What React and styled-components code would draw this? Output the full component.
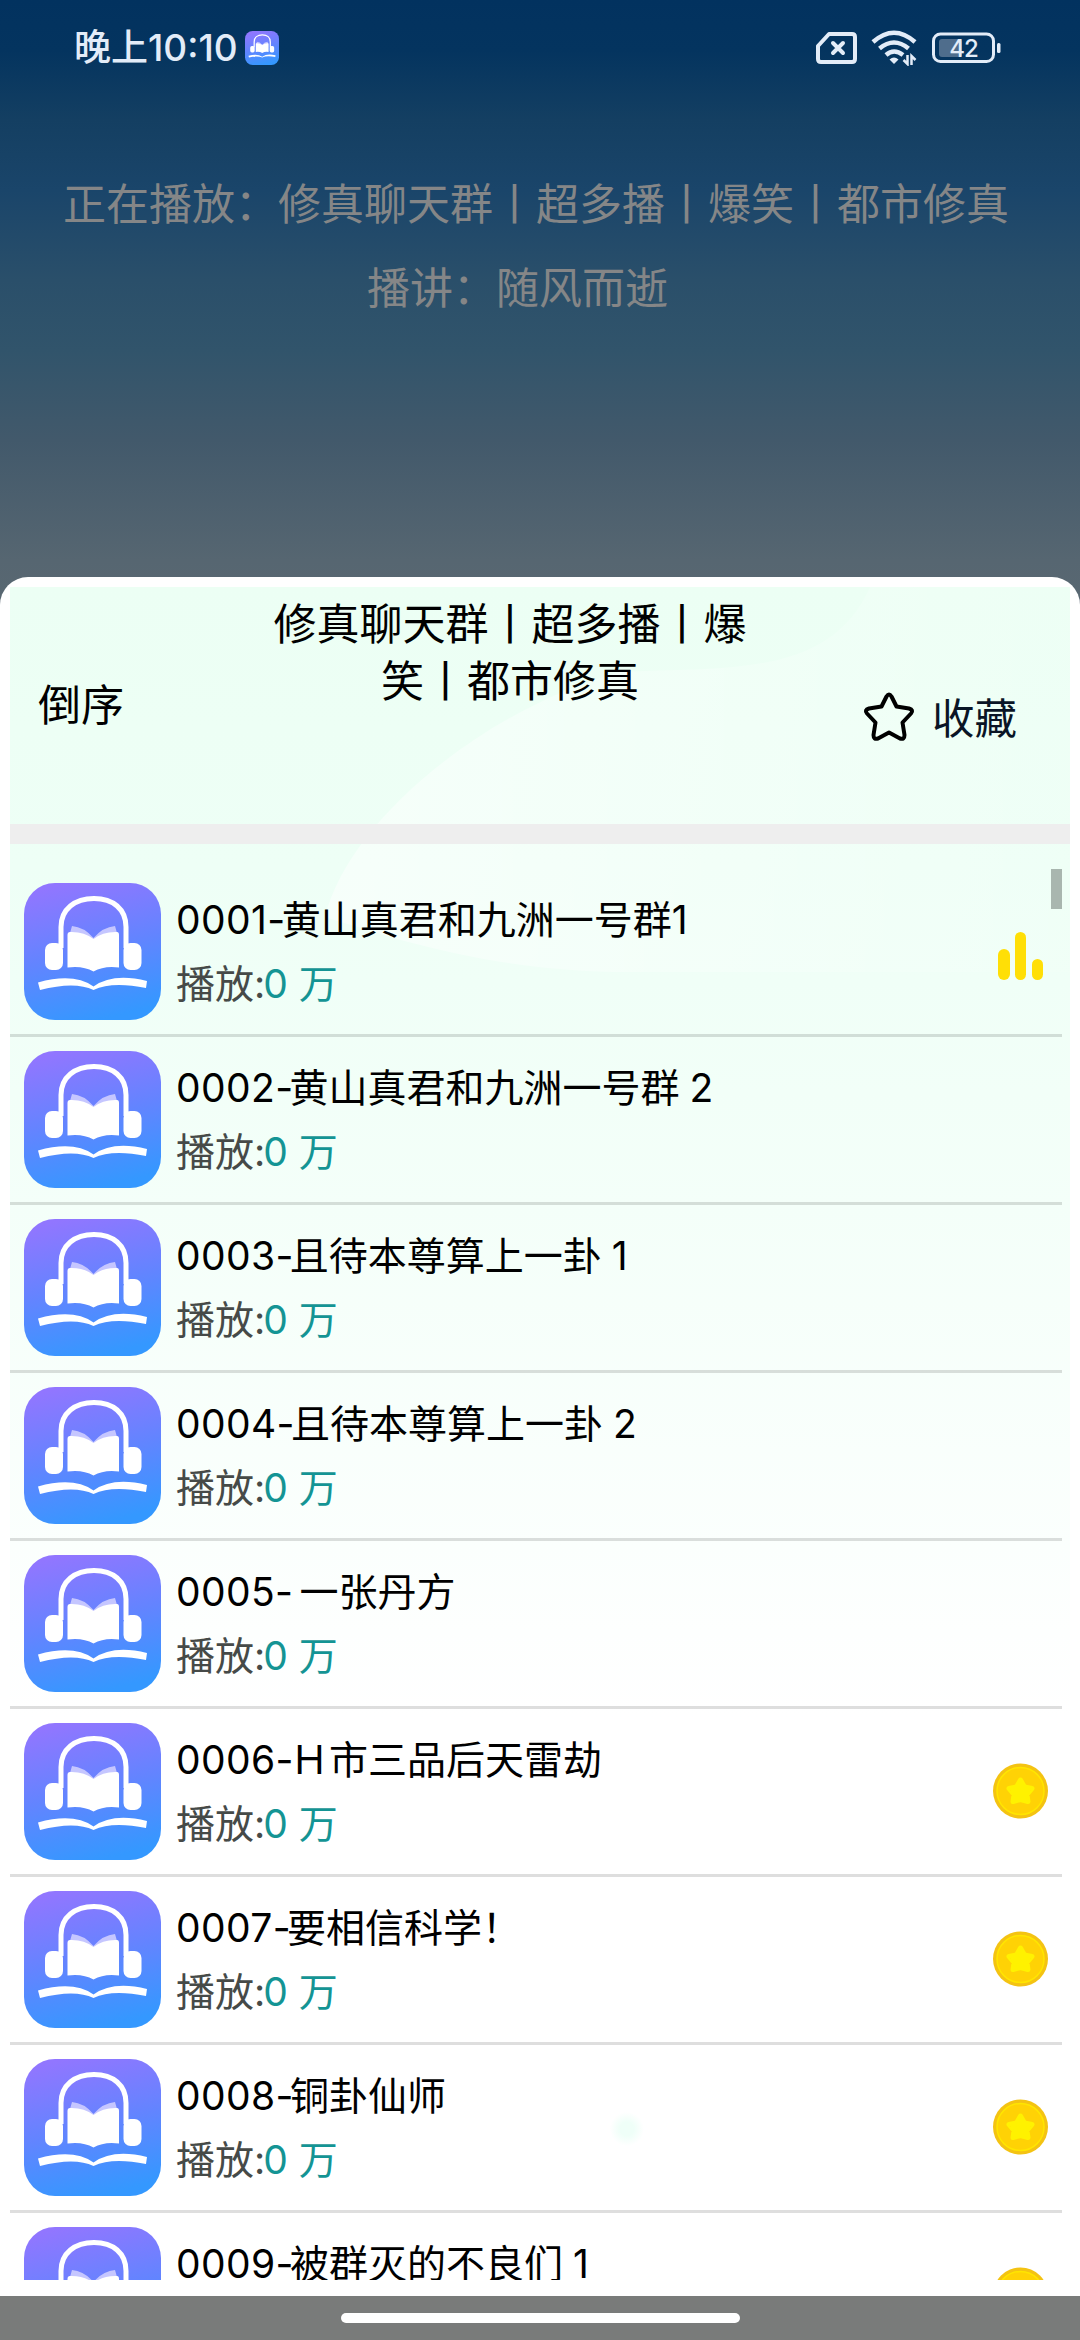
import React from 'react'
import styled, { createGlobalStyle } from 'styled-components'

const GlobalStyle = createGlobalStyle`
  * {
    box-sizing: border-box;
  }
  body {
    margin: 0;
    font-family: Inter, "Noto Sans CJK SC", sans-serif;
  }
`

const Screen = styled.div`
  display: flex;
  flex-direction: column;
  width: 1080px;
  height: 2340px;
  overflow: hidden;
  background: linear-gradient(
    #02325f 0,
    #04345f 50px,
    #143f62 120px,
    #1a456a 190px,
    #2a4f6a 280px,
    #31546b 350px,
    #42596b 440px,
    #566671 560px,
    #5a6872 620px
  );
`

const StatusBar = styled.div`
  display: flex;
  align-items: center;
  height: 96px;
  padding: 0 78px 0 74px;
  color: #e3ecf8;
`

const Clock = styled.span`
  width: 171px;
  font-size: 37px;
  font-weight: 500;
  line-height: 48px;
  white-space: nowrap;
`

const StatusIcons = styled.div`
  display: flex;
  align-items: center;
  gap: 14px;
  margin-left: auto;
`

const NowPlaying = styled.div`
  flex: none;
  height: 481px;
  padding-top: 66px;
  color: #858687;
  font-size: 43px;
  line-height: 84px;
  white-space: nowrap;
`

const PlayingTitle = styled.div`
  padding-left: 63px;
`

const PlayingAuthor = styled.div`
  padding-left: 367px;
`

const Sheet = styled.div`
  position: relative;
  flex: none;
  display: flex;
  flex-direction: column;
  height: 1719px;
  padding: 10px 10px 16px;
  border-radius: 28px 28px 0 0;
  background: #fff;
  overflow: hidden;
`

const SheetBody = styled.div`
  position: relative;
  display: flex;
  flex-direction: column;
  flex: 1;
  min-height: 0;
  background: linear-gradient(#ecfff4 0, #eefff6 280px, #f4fff9 620px, #fbfffd 960px, #fff 1130px);
`

const Glow = styled.svg`
  position: absolute;
  left: 0;
  top: 0;
`

const SheetHeader = styled.div`
  position: relative;
  display: flex;
  flex: none;
  height: 257px;
  border-bottom: 20px solid #eeeeee;
  color: #000;
  font-size: 43px;
  line-height: 57px;
`

const OrderButton = styled.div`
  width: 250px;
  padding: 90px 0 0 28px;
`

const SheetTitle = styled.div`
  width: 500px;
  padding-top: 9px;
  text-align: center;
`

const Favorite = styled.div`
  display: flex;
  align-items: center;
  height: 57px;
  margin: 103px 0 0 103px;
  color: #0a1526;
  font-size: 42.5px;
  white-space: nowrap;

  svg {
    margin: 0 17px 3px 0;
  }
`

const List = styled.div`
  position: relative;
  flex: 1;
  min-height: 0;
  padding: 25px 8px 0 0;
  overflow: hidden;
`

const Thumb = styled.div`
  position: absolute;
  top: 25px;
  right: 8px;
  width: 11px;
  height: 40px;
  background: #a9b6af;
`

const Row = styled.div`
  display: flex;
  height: 168px;
  padding: 14px 14px 0;
  border-bottom: 3px solid rgba(0, 0, 0, 0.13);
`

const RowText = styled.div`
  flex: 1;
  padding: 5px 0 0 15px;
  font-size: 39px;
  line-height: 64px;
  white-space: pre;
`

const Name = styled.div`
  height: 64px;
  color: #000;
  word-spacing: -1px;
`

const Number = styled.span`
  margin-right: -4px;
  letter-spacing: 0.4px;
`

const Plays = styled.div`
  height: 64px;
  color: #464a48;
`

const Count = styled.span`
  margin-left: -2px;
  color: #149494;
`

const Mark = styled.div`
  width: 56px;
  padding: ${props => props.$pad};
`

const NavBar = styled.div`
  display: flex;
  flex: none;
  justify-content: center;
  height: 44px;
  padding-top: 17px;
  background: #797b7a;
`

const NavHandle = styled.div`
  width: 399px;
  height: 10px;
  border-radius: 5px;
  background: #fff;
`

const LogoSvg = styled.svg`
  display: block;
  flex: none;
`

const AppLogo = ({ size }) => (
  <LogoSvg width={size} height={size} viewBox="0 0 137 137">
    <defs>
      <linearGradient id="logo" x1="0.3" y1="0" x2="0.55" y2="1">
        <stop offset="0" stopColor="#9176ff" />
        <stop offset="0.5" stopColor="#6384ff" />
        <stop offset="1" stopColor="#3498ff" />
      </linearGradient>
    </defs>
    <rect width="137" height="137" rx="31" fill="url(#logo)" />
    <path d="M37 65V44C37 26 51 15.500 70 15.500S102 26 102 44V65" fill="none" stroke="#fff" strokeWidth="5" />
    <rect x="21" y="60" width="18" height="27" rx="7" fill="#fff" />
    <rect x="99.500" y="60" width="18" height="27" rx="7" fill="#fff" />
    <path d="M46 50L48 43Q60 44 69.500 55Q79 44 91 43L93 50V60H46Z" fill="#c5c6ff" />
    <path d="M43.500 52Q43.500 49 46 49Q60 48.500 69.500 56Q79 48.500 93 49Q95 49 95 52V84.500Q80 82.500 69.500 88.500Q59 82.500 43.500 84.500Z" fill="#fff" />
    <path d="M14 99.500Q50 89.500 69.500 103.500Q89 89.500 123 98L122 105Q88 98 69.500 107Q51 98 16 107Z" fill="#fff" />
  </LogoSvg>
)

const SimIcon = () => (
  <svg width="41" height="32" viewBox="0 0 41 32" fill="none" stroke="#e3ecf8" strokeWidth="4">
    <path d="M13 2H36Q39 2 39 5V27Q39 30 36 30H5Q2 30 2 27V14Z" strokeLinejoin="round" />
    <path d="M17 11L27 21M27 11L17 21" strokeLinecap="round" />
  </svg>
)

const WifiIcon = () => (
  <svg width="47" height="36" viewBox="0 0 47 36" fill="none" stroke="#e3ecf8" strokeWidth="4.500">
    <path d="M2 12Q23 -6.500 44 12" />
    <path d="M8.500 18.500Q23 6.500 37.500 18.500" />
    <path d="M15 25Q23 18 32 25" />
    <path d="M18.500 29.500Q23 25.500 27.500 29.500L23 34Z" fill="#e3ecf8" stroke="none" />
    <path d="M36.500 25V34L32.500 30M40.500 35V26L44.500 30" strokeWidth="2.500" />
  </svg>
)

const BatteryIcon = () => (
  <svg width="70" height="32" viewBox="0 0 70 32">
    <rect x="1.500" y="2" width="60" height="27.500" rx="7" fill="none" stroke="#e3ecf8" strokeWidth="3" />
    <rect x="7" y="7" width="23" height="18" rx="3" fill="#4f6d8c" />
    <rect x="65" y="11" width="3.500" height="10" rx="1.500" fill="#e3ecf8" />
    <text x="31.500" y="24.500" textAnchor="middle" fontSize="24" fontWeight="500" letterSpacing="-1" fill="#e3ecf8">42</text>
  </svg>
)

const StarIcon = () => (
  <svg width="52" height="50" viewBox="0 0 52 50" fill="none" stroke="#000" strokeWidth="4" strokeLinejoin="round">
    <path d="M23.500 4.500Q26 0.500 28.500 4.500L33.500 14.500L46 16.500Q51 18 48 21.500L39.500 30.500L41.500 43Q41.500 48 37 46.500L26 40.500L15 46.500Q10.500 48 10.500 43L12.500 30.500L4 21.500Q1 18 6 16.500L18.500 14.500Z" />
  </svg>
)

const BarsIcon = () => (
  <svg width="46" height="48" viewBox="0 0 46 48" fill="#ffdf06">
    <rect x="0" y="17" width="12" height="31" rx="6" />
    <rect x="17" y="0" width="11" height="48" rx="5.500" />
    <rect x="34" y="27" width="11" height="21" rx="5.500" />
  </svg>
)

const CoinIcon = () => (
  <svg width="56" height="56" viewBox="0 0 56 56">
    <circle cx="28.500" cy="28" r="27.500" fill="#f4c313" />
    <circle cx="28.500" cy="28" r="23.500" fill="#ffd205" stroke="#ffe500" strokeWidth="1.500" />
    <path d="M28.500 17L32.500 24L40 25.500L35 31.500L36 38.500L28.500 36.500L21 38.500L22 31.500L17 25.500L24.500 24Z" fill="#fff200" stroke="#fff200" strokeWidth="5" strokeLinejoin="round" />
  </svg>
)

const episodes = [
  { no: '0001-', name: '黄山真君和九洲一号群1', playing: true },
  { no: '0002-', name: '黄山真君和九洲一号群 2' },
  { no: '0003-', name: '且待本尊算上一卦 1' },
  { no: '0004-', name: '且待本尊算上一卦 2' },
  { no: '0005-', name: ' 一张丹方' },
  { no: '0006-', name: 'Ｈ市三品后天雷劫', paid: true },
  { no: '0007-', name: '要相信科学！', paid: true },
  { no: '0008-', name: '铜卦仙师', paid: true },
  { no: '0009-', name: '被群灭的不良们 1', paid: true },
]

const Episode = ({ no, name, playing, paid }) => {
  return <Row>
    <AppLogo size={137} />
    <RowText>
      <Name><Number>{no}</Number>{name}</Name>
      <Plays>播放:<Count>0 万</Count></Plays>
    </RowText>
    {playing && <Mark $pad="49px 0 0 6px"><BarsIcon /></Mark>}
    {paid && <Mark $pad="40px 0 0"><CoinIcon /></Mark>}
  </Row>
}

export default () => {
  return <Screen>
    <GlobalStyle />
    <StatusBar>
      <Clock>晚上10:10</Clock>
      <AppLogo size={34} />
      <StatusIcons>
        <SimIcon />
        <WifiIcon />
        <BatteryIcon />
      </StatusIcons>
    </StatusBar>
    <NowPlaying>
      <PlayingTitle>正在播放：修真聊天群丨超多播丨爆笑丨都市修真</PlayingTitle>
      <PlayingAuthor>播讲：随风而逝</PlayingAuthor>
    </NowPlaying>
    <Sheet>
      <SheetBody>
        <Glow width="1060" height="1693" viewBox="0 0 1060 1693">
          <defs>
            <linearGradient id="glow" x1="0" y1="0.300" x2="1" y2="0.300">
              <stop offset="0" stopColor="#fff" stopOpacity="0.500" />
              <stop offset="0.6" stopColor="#fff" stopOpacity="0.220" />
              <stop offset="1" stopColor="#fff" stopOpacity="0.050" />
            </linearGradient>
            <radialGradient id="dot">
              <stop offset="0.4" stopColor="#effff8" />
              <stop offset="1" stopColor="#fff" />
            </radialGradient>
          </defs>
          <path d="M860 0C820 90 720 80 610 85C480 120 340 230 315 330C380 350 480 385 620 385H1060V0Z" fill="url(#glow)" />
          <circle cx="617" cy="1542" r="17" fill="url(#dot)" />
        </Glow>
        <SheetHeader>
          <OrderButton>倒序</OrderButton>
          <SheetTitle>修真聊天群丨超多播丨爆<br />笑丨都市修真</SheetTitle>
          <Favorite><StarIcon />收藏</Favorite>
        </SheetHeader>
        <List>
          {episodes.map(e => <Episode key={e.no} {...e} />)}
          <Thumb />
        </List>
      </SheetBody>
    </Sheet>
    <NavBar>
      <NavHandle />
    </NavBar>
  </Screen>
}
